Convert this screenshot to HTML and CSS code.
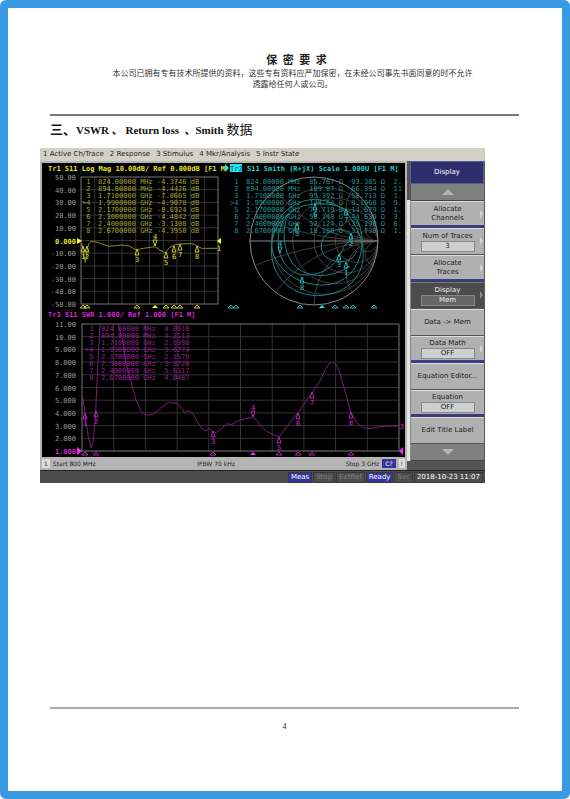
FILE: index.html
```
<!DOCTYPE html>
<html lang="zh-CN">
<head>
    <meta charset="UTF-8">
    <title>VSWR、Return loss、Smith 数据</title>
    <link rel="stylesheet" href="styles.css">
</head>
<body>
<div class="page">
    <header class="head">
        <h1>保&ensp;密&ensp;要&ensp;求</h1>
        <p>本公司已拥有专有技术所提供的资料，这些专有资料应严加保密，在未经公司事先书面同意的时不允许<br>透露给任何人或公司。</p>
    </header>
    <h2><span class="cn">三、</span>VSWR 、 Return loss&nbsp; 、Smith <span class="cn light">数据</span></h2>

    <div class="analyzer">
        <nav class="menu">
            <button>1 Active Ch/Trace</button>
            <button>2 Response</button>
            <button>3 Stimulus</button>
            <button>4 Mkr/Analysis</button>
            <button>5 Instr State</button>
        </nav>
        <div class="main">
            <div class="screen">
                <svg class="plots" viewBox="42 163 363 294">
                    <!-- Tr1 -->
                    <g class="tr1">
                        <text class="title" x="48" y="171">Tr1 S11 Log Mag 10.00dB/ Ref 0.000dB [F1 M</text>
                        <g id="grid1"></g>
                        <g id="table1" class="dim"></g>
                        <svg x="36" y="145" width="200" height="170" viewBox="0 0 600 510">
                            <path class="trace" d="M137 294L142 320L148 352L153 318L158 296L166 289L185 292L203 299L220 304L238 302L255 300L280 303L292 310L303 317L315 311L335 308L357 305L372 315L388 323L400 308L415 300L432 297L465 296L475 298L483 303L497 310H545"/>
                        </svg>
                        <path class="fill" d="M77 238l5 3l-5 3zM221 238l-4 3l4 3z"/>
                        <text x="217" y="251">1</text>
                        <g id="marks1"></g>
                    </g>
                    <!-- Tr2 -->
                    <path class="fill-cyan" d="M225 164l4 4l-4 4zM230 164h12v8h-12z"/>
                    <text class="tag" x="230" y="171">Tr2</text>
                    <g class="tr2">
                        <text class="title" x="247" y="171">S11 Smith (R+jX) Scale 1.000U [F1 M]</text>
                        <clipPath id="round"><circle cx="314" cy="241" r="64"/></clipPath>
                        <g id="smith" class="smith" clip-path="url(#round)"></g>
                        <circle class="rim" cx="314" cy="241" r="64"/>
                        <path class="rim" d="M250 241h128"/>
                        <g id="table2" class="dim"></g>
                        <svg x="220" y="145" width="270" height="170" viewBox="0 0 810 510">
                            <path class="trace" d="M410 318C400 342 385 350 360 350C322 348 303 330 304 303C305 268 335 252 362 254C392 256 404 274 386 291C366 302 374 310 364 320C352 344 332 388 256 390C212 388 186 356 176 312C166 240 204 190 262 180C330 168 398 186 418 240C444 312 410 416 312 420C232 422 168 372 156 312C148 222 216 164 286 163C338 166 376 192 396 226C412 252 432 292 430 330C428 400 376 450 290 452C204 448 156 390 154 318C154 268 172 230 206 206"/>
                            <path class="trace" d="M206 206C184 250 188 318 222 360C262 404 340 400 390 362"/>
                        </svg>
                        <g id="marks2"></g>
                    </g>
                    <!-- Tr3 -->
                    <g class="tr3">
                        <text class="title" x="48" y="317">Tr3 S11 SWR 1.000/ Ref 1.000 [F1 M]</text>
                        <g id="grid3"></g>
                        <g id="table3" class="dim"></g>
                        <svg x="36" y="305" width="370" height="152" viewBox="0 0 1110 456">
                            <path class="trace" d="M140 275L150 350L158 400L165 428L172 405L178 340L183 230L187 150L192 58M247 58L262 115L270 175L285 230L300 285L315 318L325 327L337 331L350 328L380 305L400 291L408 295L415 293L425 296L435 308L445 323L458 316L470 325L485 352L500 374L510 378L518 370L530 378L540 383L555 372L572 356L587 359L607 347L630 341L650 336L664 348L677 366L690 378L710 388L730 395L752 365L784 325L829 263L852 228L870 190L880 175L890 172L899 176L912 205L930 270L944 322L964 355L982 368L1002 371L1032 365L1060 363H1089"/>
                        </svg>
                        <path class="fill" d="M77 447l5 4l-5 4zM403 447l-4 4l4 4z"/>
                        <text class="end" x="404" y="429">3</text>
                        <g id="marks3"></g>
                    </g>
                </svg>
                <div class="sweep">
                    <span class="ch">1</span>
                    <span class="start">Start 800 MHz</span>
                    <span>IFBW 70 kHz</span>
                    <span class="stop">Stop 3 GHz</span>
                    <span class="cal">C?</span>
                    <span class="ch">!</span>
                </div>
            </div>
            <div class="scroll"></div>
            <div class="side">
                <div class="side-title">Display</div>
                <button class="arrow" aria-label="up"><svg width="12" height="6"><path d="M0 6L6 0L12 6z"/></svg></button>
                <div class="keys">
                    <button class="more sep">Allocate<br>Channels</button>
                    <button class="more">Num of Traces<span class="val">3</span></button>
                    <button class="more sep">Allocate<br>Traces</button>
                    <button class="more on">Display<span class="val">Mem</span></button>
                    <button>Data -&gt; Mem</button>
                    <button class="more sep">Data Math<span class="val">OFF</span></button>
                    <button>Equation Editor...</button>
                    <button class="sep">Equation<span class="val">OFF</span></button>
                    <button>Edit Title Label</button>
                </div>
                <button class="arrow" aria-label="down"><svg width="12" height="6"><path d="M0 0L6 6L12 0z"/></svg></button>
            </div>
        </div>
        <div class="status">
            <span class="act">Meas</span>
            <span>Stop</span>
            <span>ExtRef</span>
            <span class="act">Ready</span>
            <span>Svc</span>
            <span class="time">2018-10-23 11:07</span>
        </div>
    </div>

    <footer>4</footer>
</div>
<script>
    var NS = 'http://www.w3.org/2000/svg';
    function add(id, tag, attrs, text){
        var el = document.createElementNS(NS, tag);
        for(var k in attrs){
            el.setAttribute(k, attrs[k]);
        }
        if(text){
            el.textContent = text;
        }
        document.getElementById(id).appendChild(el);
    }
    // rectangular grid with the scale on the left
    function grid(id, x, y, w, h, labels){
        var d = '';
        for(var i = 1; i < 10; i++){
            d += 'M' + (x + w * i / 10) + ' ' + y + 'v' + h + 'M' + x + ' ' + (y + h * i / 10) + 'h' + w;
        }
        add(id, 'path', {'class': 'grid', d: d});
        add(id, 'rect', {'class': 'box', x: x, y: y, width: w, height: h});
        for(i = 0; i < labels.length; i++){
            var ref = (id == 'grid1' && i == 5) || (id == 'grid3' && i == 10);
            add(id, 'text', {'class': ref ? 'ref' : 'scale', x: 76, y: y + h * i / 10 + 3}, labels[i]);
        }
    }
    // marker list
    function table(id, x, y, gap, vals){
        var freq = ['824.00000 MHz', '894.00000 MHz', '1.7100000 GHz', '1.9900000 GHz',
            '2.1700000 GHz', '2.3000000 GHz', '2.4000000 GHz', '2.6700000 GHz'];
        for(var i = 0; i < 8; i++){
            add(id, 'text', {x: x - 4, y: y + i * 7}, (i == 3 ? '>' : '\u00a0') + (i + 1));
            add(id, 'text', {x: x + 12, y: y + i * 7}, freq[i] + gap + vals[i]);
        }
    }
    // marker triangles on the trace and along the bottom axis
    function marks(id, pts, baseX, baseY){
        for(var i = 0; i < 8; i++){
            var x = pts[i][0], y = pts[i][1];
            var down = i == 3;
            add(id, 'path', {'class': 'mark', d: 'M' + x + ' ' + y + (down ? 'l-2 -6h4z' : 'l-2 6h4z')});
            add(id, 'text', {'class': 'num', x: x, y: down ? y - 7 : y + 13}, String(i + 1));
            add(id, 'path', {'class': down ? 'fill' : 'mark', d: 'M' + baseX[i] + ' ' + baseY + 'l-3 3h6z'});
        }
    }

    grid('grid1', 81, 177, 137, 127, ['50.00', '40.00', '30.00', '20.00', '10.00', '0.000', '-10.00', '-20.00', '-30.00', '-40.00', '-50.00']);
    grid('grid3', 82, 324, 317, 127, ['11.00', '10.00', '9.000', '8.000', '7.000', '6.000', '5.000', '4.000', '3.000', '2.000', '1.000']);

    table('table1', 86, 184, ' ', ['-4.3746 dB', '-4.4426 dB', '-7.0665 dB', '-4.9078 dB', '-8.6924 dB', '-4.4842 dB', '-3.1308 dB', '-4.3950 dB']);
    table('table2', 234, 184, '\u00a0 ', ['85.767 Ω -93.385 Ω\u00a0 2.', '189.87 Ω -66.394 Ω\u00a0 11', '95.392 Ω -58.713 Ω\u00a0 1.', '144.64 Ω -8.1968 Ω\u00a0 9.',
        '71.719 Ω -14.679 Ω\u00a0 1.', '58.140 Ω -44.639 Ω\u00a0 3.', '52.124 Ω -39.190 Ω\u00a0 6.', '18.180 Ω -32.730 Ω\u00a0 1.']);
    table('table3', 89, 331, '\u00a0 ', ['4.0910', '4.2113', '2.5980', '3.6274', '2.1578', '3.9720', '5.6317', '4.0487']);

    marks('marks1', [[83, 246], [87, 246], [137, 249], [155, 246], [166, 252], [174, 246], [180, 244], [197, 246]],
        [83, 87, 137, 155, 166, 174, 180, 197], 305);
    marks('marks2', [[346, 262], [351, 233], [339, 254], [280, 253], [297, 223], [315, 204], [346, 209], [302, 277]],
        [231, 236, 300, 322, 335, 346, 353, 374], 305);
    marks('marks3', [[85, 413], [96, 411], [213, 431], [253, 417], [279, 437], [298, 413], [312, 392], [351, 412]],
        [85, 96, 213, 253, 279, 298, 312, 351], 452);

    // smith chart circles
    [0.2, 0.5, 1, 2, 5].forEach(function(v){
        var r = 64 / (1 + v);
        add('smith', 'circle', {cx: 378 - r, cy: 241, r: r});
        add('smith', 'circle', {cx: 378, cy: 241 - 64 / v, r: 64 / v});
        add('smith', 'circle', {cx: 378, cy: 241 + 64 / v, r: 64 / v});
    });
</script>
</body>
</html>
```
FILE: styles.css
```
*{
    box-sizing: border-box;
}
body{
    margin: 0;
    background: #fff;
}
.page{
    display: flex;
    flex-direction: column;
    min-height: 100vh;
    padding: 44px 43px 58px 42px;
    border: 8px solid #3a99e3;
    border-radius: 6px;
    background: #fff;
    color: #222;
    font-family: "Liberation Serif", "Noto Sans CJK SC", serif;
}
.head{
    padding: 0 0 24px 16px;
    border-bottom: 2px solid #777;
    text-align: center;
}
.head h1{
    margin: 0;
    padding-left: 8px;
    font-size: 11px;
    line-height: 16px;
}
.head p{
    margin: 0;
    font-size: 8px;
    line-height: 11px;
    color: #333;
}
h2{
    margin: 5px 0 9px;
    font-size: 11px;
    line-height: 18px;
    color: #111;
}
h2 .cn{
    font-size: 13px;
}
h2 .light{
    font-weight: normal;
}
button{
    margin: 0;
    padding: 0;
    border: 0;
    background: none;
    color: inherit;
    font: inherit;
}
.analyzer{
    margin: 0 34px 0 -10px;
    background: #d4d0c8;
    color: #222;
    font-family: "DejaVu Sans", sans-serif;
    font-size: 7px;
    line-height: 9px;
}
.menu{
    display: flex;
    gap: 6px;
    height: 13px;
    padding: 0 3px;
}
.main{
    display: flex;
    background: #555;
}
.screen{
    flex: 1;
    min-width: 0;
    padding: 2px 2px 0;
    background: #b4b4b4;
}
.plots{
    display: block;
    width: 100%;
    background: #000;
    font-family: "DejaVu Sans Mono", monospace;
    font-size: 7px;
}
.plots path,
.plots circle,
.plots rect{
    fill: none;
}
.plots .grid{
    stroke: #333;
}
.plots .box{
    stroke: #777;
}
.plots .smith{
    stroke: #443c3c;
}
.plots .rim{
    stroke: #888;
}
.plots .scale{
    fill: #999;
    text-anchor: end;
}
.plots .ref{
    font-weight: bold;
    text-anchor: end;
}
.plots .num{
    text-anchor: middle;
}
.plots .end{
    text-anchor: end;
}
.plots .trace{
    stroke-width: 3px;
}
.plots .title{
    font-weight: bold;
}
.tr1{
    fill: #e2e22c;
}
.tr1 .dim{
    fill: #a0a030;
}
.tr1 .trace{
    stroke: #8c8c24;
}
.tr1 .mark{
    stroke: #c8c82c;
}
.plots .tr1 .fill{
    fill: #ffff20;
}
.tr2{
    fill: #2cc8c8;
}
.tr2 .dim{
    fill: #209494;
}
.tr2 .trace{
    stroke: #1c8484;
}
.tr2 .mark{
    stroke: #28b4b4;
}
.plots .tr2 .fill,
.plots .fill-cyan{
    fill: #20e8f0;
}
.plots .tag{
    fill: #044;
}
.tr3{
    fill: #d428d4;
}
.tr3 .dim{
    fill: #942094;
}
.tr3 .trace{
    stroke: #7c1c7c;
}
.tr3 .mark{
    stroke: #b424b4;
}
.plots .tr3 .fill{
    fill: #ff28ff;
}
.sweep{
    display: flex;
    align-items: center;
    gap: 3px;
    height: 13px;
    font-size: 6px;
}
.sweep .ch{
    padding: 0 2px;
    background: #ddd;
}
.sweep .start{
    flex: 1;
}
.sweep .stop{
    flex: 1;
    text-align: right;
}
.sweep .cal{
    padding: 0 3px;
    background: #34349c;
    color: #fff;
}
.scroll{
    width: 4px;
    margin: 39px 0 9px;
    border-right: 1px solid #888;
    background: #e4e4e4;
}
.side{
    width: 74px;
    padding-right: 1px;
}
.side-title{
    height: 23px;
    margin-left: -1px;
    border: 1px solid #5c5c94;
    background: #2e2e6c;
    color: #fff;
    line-height: 21px;
    text-align: center;
}
.arrow{
    display: flex;
    align-items: center;
    justify-content: center;
    width: 100%;
    height: 17px;
    border-bottom: 1px solid #444;
    background: #808080;
}
.arrow path{
    fill: #b4b4b4;
}
.keys button{
    display: flex;
    flex-direction: column;
    align-items: center;
    justify-content: center;
    position: relative;
    width: 100%;
    height: 27px;
    border-top: 1px solid #ddd;
    border-bottom: 1px solid #555;
    background: #b0b0b0;
}
.keys .sep{
    border-bottom: 3px solid #3c3c7c;
}
.keys .more:after{
    content: "";
    position: absolute;
    right: 1px;
    top: 8px;
    border: 4px solid transparent;
    border-left: 3px solid #d4d4d4;
    border-right: 0;
}
.keys .val{
    width: 54px;
    border: 1px solid #888;
    background: #cfcfcf;
}
.keys .on{
    border-top-color: #777;
    background: #4c4c4c;
    color: #eee;
}
.keys .on .val{
    background: #666;
}
.keys .on:after{
    border-left-color: #888;
}
.status{
    display: flex;
    align-items: center;
    justify-content: flex-end;
    gap: 1px;
    height: 13px;
    padding-right: 2px;
    border-top: 1px solid #222;
    background: #4c4c4c;
    color: #808080;
}
.status span{
    padding: 0 2px;
    border: 1px solid #3a3a3a;
}
.status .act{
    background: #34349c;
    color: #fff;
}
.status .time{
    color: #fff;
}
footer{
    margin-top: auto;
    padding-top: 12px;
    border-top: 2px solid #aaa;
    font-size: 8px;
    line-height: 12px;
    text-align: center;
}
```
